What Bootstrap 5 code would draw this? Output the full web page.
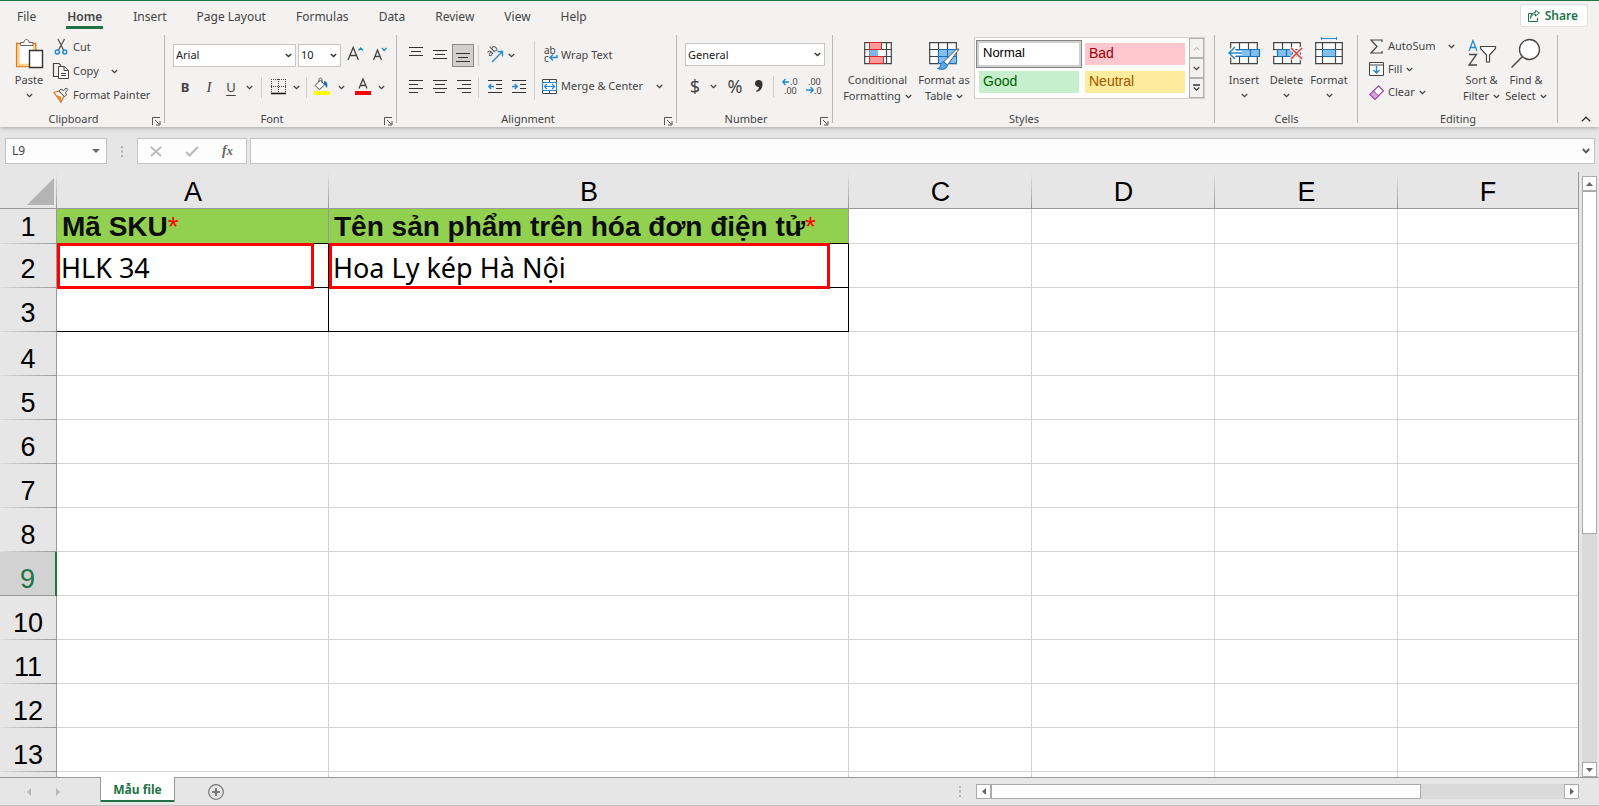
<!DOCTYPE html>
<html lang="vi">
<head>
<meta charset="utf-8">
<meta name="viewport" content="width=device-width, initial-scale=1">
<title>Mẫu file</title>
<link href="https://cdn.jsdelivr.net/npm/bootstrap@5.3.0/dist/css/bootstrap.min.css" rel="stylesheet">
<style>
  :root { --chrome:#e6e6e6; --ribbon:#f3f2f1; --green:#217346; --ink:#444; --edge:#c6c6c6; --hdr:#999; }
  body { font-family:"Noto Sans","Open Sans",sans-serif; font-size:11px; line-height:16px; color:var(--ink); background:var(--chrome); }
  svg { display:block; flex:none; fill:none; overflow:visible; }
  button { color:inherit; }
  .ribbon { background:var(--ribbon); border-top:1px solid var(--green); box-shadow:0 1px 4px rgba(0,0,0,.28); z-index:2; }
  .tabs { height:34px; padding:0 11px 0 17px; font-size:12px; gap:30px; }
  .tabs .tab-link { color:var(--ink); text-decoration:none; line-height:18px; padding:7px 0 0; border-bottom:3px solid transparent; }
  .tabs .tab-link.active { font-weight:600; border-color:var(--green); padding:7px 1px 0; }
  .share { height:23px; margin-top:3px; padding:0 9px 0 7px; background:#fff; border:1px solid #e1dfdd; border-radius:2px; color:var(--green); font-weight:600; gap:5px; }
  .rgroup { height:92px; background:linear-gradient(#b9b8b7,#b9b8b7) right top/1px 88px no-repeat; }
  .rbody { height:76px; }
  .rlabel { line-height:16px; text-align:center; }
  .launch { width:18px; padding:4px 0 0 5px; }
  .rb { border:0; background:none; padding:0; display:flex; align-items:center; justify-content:center; white-space:nowrap; font-size:11px; line-height:16px; }
  .rb.ic { width:24px; height:24px; }
  .rb.chev { width:16px; height:24px; }
  .rb.launch { padding:4px 0 0 0; }
  .big { flex-direction:column; justify-content:flex-start; padding-top:3px; }
  .big .pic { height:34px; }
  .big .dd { height:14px; display:flex; align-items:center; }
  .big .line2 { display:flex; align-items:center; gap:4px; }
  .rrow { height:24px; display:flex; align-items:center; }
  .rsel { height:23px; border:1px solid var(--edge); background:#fff url("data:image/svg+xml,%3Csvg xmlns='http://www.w3.org/2000/svg' width='7' height='5'%3E%3Cpath d='M.8 1l2.7 2.6L6.200 1' fill='none' stroke='%23333' stroke-width='1.400'/%3E%3C/svg%3E") no-repeat right 3px center; appearance:none; padding:0 12px 0 2px; font-size:11px; color:#222; border-radius:0; }
  .sep { width:1px; height:21px; background:#d0cfce; flex:none; }
  .pressed { background:#d0cfcd!important; box-shadow:inset 0 0 0 1px #8c8a88; }
  .gallery { width:231px; height:62px; border:1px solid #d0d0d0; background:#fff; margin-top:2px; }
  .tiles { display:grid; grid-template-columns:100px 100px; grid-auto-rows:22px; gap:6px; padding:5px 3px 0 4px; }
  .tile { border:0; padding:0 0 2px 4px; text-align:left; font:14px/16px "Liberation Sans",Arial,sans-serif; }
  .tile.sel { background:#fff; color:#000; outline:1px solid #858585; outline-offset:2px; box-shadow:0 0 0 2px #d0d0cf; font-size:13px; }
  .spin { width:15px; }
  .spin button { flex:1; border:1px solid #b3b3b3; background:var(--ribbon); padding:0; display:flex; align-items:center; justify-content:center; }
  .fbar { padding:11px 4px 8px 5px; }
  .fbox { height:26px; background:#fdfdfd; border:1px solid #c3c3c3; }
  .fbox input { border:0; background:transparent; padding:0 0 0 6px; width:100%; font-size:12px; color:var(--ink); }
  .sheet-area { min-height:0; }
  .gridwrap { overflow:hidden; background:#fff; border-right:1px solid var(--hdr); min-width:0; }
  .xl { table-layout:fixed; width:100%; border-collapse:separate; border-spacing:0; font:27px/32px "Liberation Sans",Arial,sans-serif; color:#000; }
  .xl th { background:var(--chrome); font-weight:400; text-align:center; padding:0; vertical-align:bottom; }
  .xl thead th { height:37px; border-bottom:1px solid var(--hdr); background:linear-gradient(#e0e0e0,#999) right bottom/1px 34px no-repeat var(--chrome); }
  .xl thead th:last-child { background:var(--chrome); }
  .xl tbody th { border-right:1px solid var(--hdr); background:linear-gradient(90deg,#dcdcdc,#999) left bottom/100% 1px no-repeat var(--chrome); padding-bottom:3px; }
  .xl tbody tr:nth-child(n+4) th { padding-bottom:1px; }
  .xl td { height:44px; border-right:1px solid #d4d4d4; border-bottom:1px solid #d4d4d4; padding:0 4px; vertical-align:bottom; position:relative; white-space:nowrap; }
  .xl td:last-child { border-right:0; }
  .xl .titles td { height:35px; }
  .xl .titles th { padding-bottom:1px; }
  .xl .titles .lime { background:#92d050; font-weight:700; border-right-color:var(--hdr); border-bottom-color:#000; color:#0d0d0d; line-height:33px; font-size:28px; padding-left:5px; }
  .xl .req { color:#f00; font-weight:400; }
  .xl .boxed { border-color:#000; font-family:"Noto Sans","Open Sans",sans-serif; padding-bottom:3px; }
  .xl tbody .current { background:linear-gradient(#999,#999) left bottom/100% 1px no-repeat #d2d2d2; color:var(--green); border-right:2px solid var(--green); }
  .redbox { position:absolute; inset:-1px 14px -2px 0; border:3px solid #f00; z-index:1; }
  .redbox.wide { right:18px; }
  .corner { display:block; margin:0 3px 3px auto; width:27px; height:27px; background:#b4b4b4; clip-path:polygon(100% 0,100% 100%,0 100%); }
  .vbar { width:20px; padding:4px 2px 0 3px; }
  .sbtn { width:15px; height:15px; border:1px solid #ababab; background:#fff; padding:0; display:flex; align-items:center; justify-content:center; flex:none; }
  .track { background:#dadada; }
  .thumb { background:#fff; border:1px solid #ababab; }
  .footbar { height:29px; flex:none; border-top:1px solid var(--hdr); border-bottom:1px solid #c4c4c4; }
  .sheet-tab { width:75px; height:25px; margin-top:-1px; background:#fff; border:1px solid var(--hdr); border-width:0 1px; box-shadow:inset 0 -2px 0 var(--green); color:var(--green); font-weight:700; font-size:12px; padding:0; }
</style>
</head>
<body class="vh-100 d-flex flex-column overflow-hidden">
<svg width="0" height="0" class="position-absolute" aria-hidden="true">
  <symbol id="cv" viewBox="0 0 7 5"><path d="M.8 1l2.700 2.600L6.200 1" stroke="#444" stroke-width="1.300" fill="none"/></symbol>
  <symbol id="lau" viewBox="0 0 9 9"><path d="M.5 8V.5H8M3 3l4.500 4.500M8 4v4H4" stroke="#555" fill="none"/></symbol>
</svg>

<header class="ribbon position-relative flex-shrink-0">
  <nav class="tabs d-flex align-items-start">
    <a class="tab-link" href="#">File</a><a class="tab-link active" href="#">Home</a><a class="tab-link" href="#">Insert</a><a class="tab-link" href="#">Page Layout</a><a class="tab-link" href="#">Formulas</a><a class="tab-link" href="#">Data</a><a class="tab-link" href="#">Review</a><a class="tab-link" href="#">View</a><a class="tab-link" href="#">Help</a>
    <button class="share d-flex align-items-center ms-auto"><svg width="12" height="12" viewBox="0 0 12 12" stroke="#217346"><path d="M4 3.500H.5v8h9V8M2.500 8.500c.5-3 2-4.500 5-4.500V6l4-3.200L7.500.5v1.800C4 2.500 2.500 5 2.500 8.500z"/></svg>Share</button>
  </nav>

  <div class="d-flex">
    <!-- Clipboard -->
    <section class="rgroup" style="width:165px">
      <div class="rbody d-flex" style="padding-left:5px">
        <button class="rb big" style="width:48px"><span class="pic"><svg width="28" height="32" viewBox="0 0 28 32"><path d="M1.700 5.500h19v23h-19z" fill="#fff" stroke="#e07a10" stroke-width="1.500"/><path d="M3.500 7v20h15.500V7" stroke="#f8d48a" stroke-width="2.500"/><path d="M5.500 7.500v-3h3.500c0-4 5-4 5 0h4v3z" fill="#fff" stroke="#666"/><path d="M14.500 12.500h13v17h-13z" fill="#fff" stroke="#333" stroke-width="1.400"/></svg></span><span>Paste</span><span class="dd"><svg width="7" height="5"><use href="#cv"/></svg></span></button>
        <div>
          <div class="rrow"><button class="rb gap-1"><svg width="16" height="18" viewBox="0 0 16 18"><path d="M5 1l5.500 11M11.500 1L5.500 12" stroke="#555" stroke-width="1.300"/><circle cx="4.300" cy="14" r="2" stroke="#2288d0" stroke-width="1.500"/><circle cx="11.700" cy="14" r="2" stroke="#2288d0" stroke-width="1.500"/></svg>Cut</button></div>
          <div class="rrow"><button class="rb gap-1"><svg width="16" height="18" viewBox="0 0 16 18"><path d="M5 14.500H.5v-13H6l2 2" stroke="#444" stroke-width="1.200"/><path d="M5.500 4.500h6l4 4v8h-10zM11 4.500v4h4.500M8 11.500h5M8 13.500h5" fill="#fff" stroke="#444"/></svg>Copy</button><button class="rb chev ms-2" aria-label="Copy options"><svg width="7" height="5"><use href="#cv"/></svg></button></div>
          <div class="rrow"><button class="rb gap-1"><svg width="16" height="18" viewBox="0 0 16 18"><path d="M1 6.500l5-1.500 5 5-3 6z" fill="#fff" stroke="#d8741a" stroke-width="1.200"/><path d="M2 8.500l6 2 .5 4.500L6 13.500z" fill="#ef8b2c"/><path d="M6 5l2-2 2.500 1.500L13 2l2 1.500-2.500 3L13.500 9l-2 1.500z" fill="#eee" stroke="#555"/></svg>Format Painter</button></div>
        </div>
      </div>
      <div class="d-flex"><div class="rlabel flex-fill">Clipboard</div><button class="rb launch" aria-label="Clipboard settings"><svg width="9" height="9"><use href="#lau"/></svg></button></div>
    </section>

    <!-- Font -->
    <section class="rgroup" style="width:232px">
      <div class="rbody d-flex flex-column gap-2 pt-2 ps-2">
        <div class="d-flex align-items-center">
          <select class="rsel" style="width:123px" aria-label="Font"><option>Arial</option></select>
          <select class="rsel" style="width:43px;margin-left:2px" aria-label="Font size"><option>10</option></select>
          <button class="rb ic ms-1" aria-label="Increase font size"><svg width="18" height="18" viewBox="0 0 18 18"><path d="M0 14L5.200 1.500 10.400 14M2 9.500h6.500" stroke="#444" stroke-width="1.300"/><path d="M10.500 4.500L12.700 2 15 4.500" stroke="#2288d0" stroke-width="1.300"/></svg></button>
          <button class="rb ic" aria-label="Decrease font size"><svg width="18" height="18" viewBox="0 0 18 18"><path d="M1.500 14L5.500 4l4 10M3 10.500h5" stroke="#444" stroke-width="1.300"/><path d="M10 2l2.200 2.500L14.500 2" stroke="#2288d0" stroke-width="1.300"/></svg></button>
        </div>
        <div class="rrow">
          <button class="rb ic" style="font-size:13px"><b>B</b></button>
          <button class="rb ic" style="font:italic 15px 'Liberation Serif',serif">I</button>
          <button class="rb" style="font-size:13px;width:20px;text-decoration:underline;text-underline-offset:3px">U</button>
          <button class="rb chev" aria-label="Underline options"><svg width="7" height="5"><use href="#cv"/></svg></button>
          <span class="sep ms-1"></span>
          <button class="rb ic ms-1" aria-label="Borders"><svg width="15" height="16" viewBox="0 0 15 16"><path d="M0 .5h15M0 7.500h15M.5 0v14M7.500 0v14M14.500 0v14" stroke="#444" stroke-dasharray="1 1"/><path d="M0 14.500h15" stroke="#111" stroke-width="1.500"/></svg></button>
          <button class="rb chev" aria-label="Border options" style="width:12px"><svg width="7" height="5"><use href="#cv"/></svg></button>
          <span class="sep ms-1"></span>
          <button class="rb ic" aria-label="Fill colour" style="width:28px"><svg width="18" height="18" viewBox="0 0 18 18"><path d="M3 7.500L8.500 2l4 5-5 4.500zM7 4V1.500c0-2 3-2 3 0V5" fill="#fff" stroke="#555"/><path d="M12 3c3 0 4 3 3 7-1-.5-1-3-3-3z" fill="#1a6fb5"/><path d="M2 13h16v4H2z" fill="#ff0"/></svg></button>
          <button class="rb chev" aria-label="Fill colour options" style="width:12px"><svg width="7" height="5"><use href="#cv"/></svg></button>
          <button class="rb ic ms-1" aria-label="Font colour"><svg width="16" height="18" viewBox="0 0 16 18"><path d="M4 10.500L8 1l4 9.500M5.300 7.500h5.400" stroke="#444" stroke-width="1.300"/><path d="M0 13h16v4H0z" fill="red"/></svg></button>
          <button class="rb chev" aria-label="Font colour options" style="width:12px"><svg width="7" height="5"><use href="#cv"/></svg></button>
        </div>
      </div>
      <div class="d-flex"><div class="rlabel flex-fill">Font</div><button class="rb launch" aria-label="Font settings"><svg width="9" height="9"><use href="#lau"/></svg></button></div>
    </section>

    <!-- Alignment -->
    <section class="rgroup" style="width:280px">
      <div class="rbody d-flex" style="padding-left:7px">
        <div class="d-flex flex-column gap-2 pt-2" style="width:130px">
          <div class="d-flex align-items-center">
            <button class="rb" style="width:24px;height:23px" aria-label="Top align"><svg width="14" height="16" viewBox="0 0 14 16"><path d="M0 .5h14M2 4.500h10M0 8.500h14" stroke="#333"/></svg></button>
            <button class="rb" style="width:24px;height:23px" aria-label="Middle align"><svg width="14" height="16" viewBox="0 0 14 16"><path d="M0 3.500h14M2 7.500h10M0 11.500h14" stroke="#333"/></svg></button>
            <button class="rb pressed" style="width:22px;height:23px" aria-label="Bottom align"><svg width="14" height="16" viewBox="0 0 14 16"><path d="M0 6.500h14M2 10.500h10M0 14.500h14" stroke="#333"/></svg></button>
            <span class="sep ms-1"></span>
            <button class="rb ic ms-1" aria-label="Orientation"><svg width="18" height="18" viewBox="0 0 18 18"><text transform="translate(4 11) rotate(-45)" font-size="10" fill="#444">ab</text><path d="M6 16L16 6M11.500 5.500h5v5" stroke="#2288d0" stroke-width="1.300"/></svg></button>
            <button class="rb chev" aria-label="Orientation options" style="width:8px"><svg width="7" height="5"><use href="#cv"/></svg></button>
          </div>
          <div class="rrow">
            <button class="rb ic" aria-label="Align left"><svg width="14" height="14" viewBox="0 0 14 14"><path d="M0 .5h14M0 4.500h9M0 8.500h14M0 12.500h9" stroke="#333"/></svg></button>
            <button class="rb ic" aria-label="Center"><svg width="14" height="14" viewBox="0 0 14 14"><path d="M0 .5h14M2 4.500h10M0 8.500h14M2 12.500h10" stroke="#333"/></svg></button>
            <button class="rb ic" aria-label="Align right"><svg width="14" height="14" viewBox="0 0 14 14"><path d="M0 .5h14M5 4.500h9M0 8.500h14M5 12.500h9" stroke="#333"/></svg></button>
            <span class="sep" style="margin-left:2px"></span>
            <button class="rb ic ms-1" aria-label="Decrease indent"><svg width="14" height="14" viewBox="0 0 14 14"><path d="M0 .5h14M8 4.500h6M8 8.500h6M0 12.500h14" stroke="#333"/><path d="M.8 6.500H6M3.200 4L.8 6.500 3.200 9" stroke="#2288d0" stroke-width="1.400"/></svg></button>
            <button class="rb ic" aria-label="Increase indent"><svg width="14" height="14" viewBox="0 0 14 14"><path d="M0 .5h14M8 4.500h6M8 8.500h6M0 12.500h14" stroke="#333"/><path d="M0 6.500h5.200M2.800 4l2.400 2.500L2.800 9" stroke="#2288d0" stroke-width="1.400"/></svg></button>
          </div>
        </div>
        <span class="sep" style="height:59px;margin-top:6px"></span>
        <div class="d-flex flex-column gap-2 pt-2" style="padding-left:7px">
          <button class="rb gap-1" style="height:23px;justify-content:flex-start"><svg width="15" height="17" viewBox="0 0 15 17"><text x="2" y="8" font-size="10" fill="#444">ab</text><text x="2" y="16" font-size="10" fill="#444">c</text><path d="M15 9v2.500H8.500M11 8.500l-3 3 3 3" stroke="#2288d0" stroke-width="1.400"/></svg>Wrap Text</button>
          <div class="rrow"><button class="rb gap-1"><svg width="15" height="15" viewBox="0 0 15 15"><path d="M.5.5h14v14H.5zM7.500 0v4M7.500 11v4" fill="#fff" stroke="#444"/><path d="M.5 3.500h14v8H.5z" fill="#fff" stroke="#2288d0"/><path d="M2.500 7.500h10M5 5L2.500 7.500 5 10M10 5l2.500 2.500L10 10" stroke="#2288d0" stroke-width="1.200"/></svg>Merge &amp; Center</button><button class="rb chev ms-2" aria-label="Merge options"><svg width="7" height="5"><use href="#cv"/></svg></button></div>
        </div>
      </div>
      <div class="d-flex"><div class="rlabel flex-fill">Alignment</div><button class="rb launch" aria-label="Alignment settings"><svg width="9" height="9"><use href="#lau"/></svg></button></div>
    </section>

    <!-- Number -->
    <section class="rgroup" style="width:156px">
      <div class="rbody d-flex flex-column gap-2 pt-2 ps-2">
        <select class="rsel" style="width:140px" aria-label="Number format"><option>General</option></select>
        <div class="rrow">
          <button class="rb" style="width:20px;font-size:18px">$</button>
          <button class="rb chev" aria-label="Currency options"><svg width="7" height="5"><use href="#cv"/></svg></button>
          <button class="rb" style="width:28px;font-size:18px">%</button>
          <button class="rb" style="width:20px" aria-label="Comma style"><svg width="10" height="14" viewBox="0 0 10 14"><path d="M4.500 1C7 1 8.500 2.500 8.500 5c0 4-2 7-6 8l-.5-1c2-1 3-2.500 3-4C2.500 8 1 6.500 1 4.500 1 2.500 2.500 1 4.500 1z" fill="#333"/></svg></button>
          <span class="sep ms-1"></span>
          <button class="rb ic ms-1" aria-label="Increase decimal"><svg width="16" height="18" viewBox="0 0 16 18" font-size="9"><text x="8" y="8" fill="#444">.0</text><text x="2" y="17" fill="#444">.00</text><path d="M1 5h6M3.500 2L.8 5l2.700 3" stroke="#2288d0" stroke-width="1.300"/></svg></button>
          <button class="rb ic" aria-label="Decrease decimal"><svg width="16" height="18" viewBox="0 0 16 18" font-size="9"><text x="2" y="8" fill="#444">.00</text><text x="8" y="17" fill="#444">.0</text><path d="M0 13h7M4.500 10l2.700 3-2.700 3" stroke="#2288d0" stroke-width="1.300"/></svg></button>
        </div>
      </div>
      <div class="d-flex"><div class="rlabel flex-fill">Number</div><button class="rb launch" aria-label="Number settings"><svg width="9" height="9"><use href="#lau"/></svg></button></div>
    </section>

    <!-- Styles -->
    <section class="rgroup" style="width:382px">
      <div class="rbody d-flex ps-2">
        <button class="rb big" style="width:73px"><span class="pic"><svg width="28" height="30" viewBox="0 0 28 30"><path d="M.7 4.700h26.600v21H.7zM0 11.500h28M0 18.500h28M6 4v22M22.500 4v22" fill="#fff" stroke="#444" stroke-width="1.200"/><path d="M5.500 4.500h12v7h-12zM5.500 18.500h14v7h-14z" fill="#ff9a9a" stroke="#e0262b"/><path d="M6 12h8v6H6z" fill="#7db8ea"/></svg></span><span>Conditional</span><span class="line2">Formatting <svg width="7" height="5"><use href="#cv"/></svg></span></button>
        <button class="rb big" style="width:60px"><span class="pic"><svg width="31" height="30" viewBox="0 0 31 30"><path d="M.7 4.700h26.600v21H.7zM0 11.500h28M0 18.500h28M9.500 4v22M18.500 4v22" fill="#fff" stroke="#444" stroke-width="1.200"/><path d="M9.500 11.500h18v14h-18zM9.500 18.500h18M18.500 11v15" fill="#83beec" stroke="#1a6fb5"/><path d="M30 11L18.500 27l-4-3L27 11.500z" fill="#fff" stroke="#555"/><path d="M14.500 24l4 3c-1 5-6 5-10 3.500 3 0 3-6 6-6.500z" fill="#5aa7e4" stroke="#1a6fb5"/></svg></span><span>Format as</span><span class="line2">Table <svg width="7" height="5"><use href="#cv"/></svg></span></button>
        <div class="gallery d-flex">
          <div class="tiles flex-fill"><button class="tile sel">Normal</button><button class="tile" style="background:#ffc7ce;color:#9c0006">Bad</button><button class="tile" style="background:#c6efce;color:#006100">Good</button><button class="tile" style="background:#ffeb9c;color:#9c5700">Neutral</button></div>
          <div class="spin d-flex flex-column"><button aria-label="Previous styles"><svg width="7" height="5" viewBox="0 0 7 5"><path d="M.8 4l2.700-2.600L6.200 4" stroke="#aaa"/></svg></button><button aria-label="Next styles"><svg width="7" height="5"><use href="#cv"/></svg></button><button aria-label="More styles"><svg width="7" height="8" viewBox="0 0 7 8"><path d="M0 1h7M.8 3.500l2.700 2.600 2.700-2.600" stroke="#333" stroke-width="1.300"/></svg></button></div>
        </div>
      </div>
      <div class="rlabel">Styles</div>
    </section>

    <!-- Cells -->
    <section class="rgroup" style="width:143px">
      <div class="rbody d-flex justify-content-center">
        <button class="rb big" style="width:43px"><span class="pic"><svg width="32" height="30" viewBox="0 0 32 30"><path d="M2.700 4.700h26.600v21H2.700zM2 11.500h28M2 18.500h28M11.500 4v22M20.500 4v22" fill="#fff" stroke="#444" stroke-width="1.200"/><path d="M8 11.500h23.500v7H8M22.500 12v6" fill="#83beec" stroke="#1a6fb5" stroke-width="1.200"/><path d="M14 15H1M7 9l-6 6 6 6" stroke="#fff" stroke-width="4"/><path d="M14 15H1M7 9l-6 6 6 6" stroke="#2288d0" stroke-width="1.500"/></svg></span><span>Insert</span><span class="dd"><svg width="7" height="5"><use href="#cv"/></svg></span></button>
        <button class="rb big" style="width:42px"><span class="pic"><svg width="28" height="30" viewBox="0 0 28 30"><path d="M.7 4.700h26.600v21H.7zM0 11.500h28M0 18.500h28M9.500 4v22M18.500 4v22" fill="#fff" stroke="#444" stroke-width="1.200"/><path d="M0 12.200h4v5.600H0z" fill="#f3f2f1"/><path d="M4.500 11.500h15v7h-15zM13.500 12v6" fill="#83beec" stroke="#1a6fb5" stroke-width="1.200"/><path d="M18 10l11 11M29 10L18 21" stroke="#f3f2f1" stroke-width="4"/><path d="M18 10l11 11M29 10L18 21" stroke="#e8393d" stroke-width="1.500"/></svg></span><span>Delete</span><span class="dd"><svg width="7" height="5"><use href="#cv"/></svg></span></button>
        <button class="rb big" style="width:43px"><span class="pic"><svg width="28" height="30" viewBox="0 0 28 30"><path d="M.7 4.700h26.600v21H.7zM0 11.500h28M0 18.500h28M7.500 4v22M20.500 4v22" fill="#fff" stroke="#444" stroke-width="1.200"/><path d="M7.500 11.500h13v7h-13z" fill="#83beec" stroke="#1a6fb5"/><path d="M6.500 -1v3M21.500 -1v3M6.500 .5h15" stroke="#2288d0"/></svg></span><span>Format</span><span class="dd"><svg width="7" height="5"><use href="#cv"/></svg></span></button>
      </div>
      <div class="rlabel">Cells</div>
    </section>

    <!-- Editing -->
    <section class="rgroup" style="width:200px">
      <div class="rbody d-flex" style="padding-left:11px">
        <div style="width:91px">
          <div class="rrow" style="height:22px"><button class="rb gap-1"><svg width="15" height="15" viewBox="0 0 15 15"><path d="M13 3V1H2l6 6.500L2 14h11v-2" stroke="#444" stroke-width="1.200"/></svg>AutoSum</button><button class="rb chev ms-2" aria-label="AutoSum options"><svg width="7" height="5"><use href="#cv"/></svg></button></div>
          <div class="rrow"><button class="rb gap-1"><svg width="15" height="14" viewBox="0 0 15 14"><path d="M.5.5h14v13H.5zM.5 3h14" fill="#fff" stroke="#444"/><path d="M7.500 4v7M4.500 8l3 3 3-3" stroke="#2288d0" stroke-width="1.400"/></svg>Fill <svg width="7" height="5"><use href="#cv"/></svg></button></div>
          <div class="rrow" style="height:22px"><button class="rb gap-1"><svg width="15" height="15" viewBox="0 0 15 15"><path d="M1 9.500L9.500.8l5 5L6 14.300z" fill="#fff" stroke="#9b3fa8" stroke-width="1.200"/><path d="M1 9.500l3.500-3.600 5 5L6 14.300z" fill="#d9a0df" stroke="#9b3fa8"/></svg>Clear <svg width="7" height="5"><use href="#cv"/></svg></button></div>
        </div>
        <button class="rb big" style="width:43px"><span class="pic"><svg width="28" height="30" viewBox="0 0 28 30"><path d="M1 13L5 2.500 9 13M2.300 9.500h5.400" stroke="#2288d0" stroke-width="1.300"/><path d="M1 16.500h7.500L1 27h8" stroke="#444" stroke-width="1.300"/><path d="M12.500 8.500h15v2l-6 6.500v7h-3v-7l-6-6.500z" fill="#fff" stroke="#444" stroke-width="1.200"/></svg></span><span>Sort &amp;</span><span class="line2">Filter <svg width="7" height="5"><use href="#cv"/></svg></span></button>
        <button class="rb big" style="width:46px"><span class="pic"><svg width="30" height="30" viewBox="0 0 30 30"><circle cx="18.500" cy="11.500" r="10" fill="#fff" stroke="#444" stroke-width="1.300"/><path d="M11.500 18.500L.5 29.500" stroke="#444" stroke-width="1.400"/></svg></span><span>Find &amp;</span><span class="line2">Select <svg width="7" height="5"><use href="#cv"/></svg></span></button>
      </div>
      <div class="rlabel">Editing</div>
    </section>
    <button class="rb ms-auto align-self-end pe-2" style="height:16px" aria-label="Collapse ribbon"><svg width="10" height="6" viewBox="0 0 10 6"><path d="M.8 5.200L5 1.200l4.200 4" stroke="#333" stroke-width="1.300"/></svg></button>
  </div>
</header>

<div class="fbar d-flex align-items-center flex-shrink-0">
  <div class="fbox d-flex align-items-center" style="width:102px"><input value="L9" aria-label="Name box"><svg width="8" height="5" viewBox="0 0 8 5" style="margin-right:6px"><path d="M0 0h8L4 4z" fill="#666"/></svg></div>
  <svg width="2" height="11" viewBox="0 0 2 11" style="margin:0 14px"><path d="M0 0h2v2H0zM0 4.500h2v2H0zM0 9h2v2H0z" fill="#b0b0b0"/></svg>
  <div class="fbox d-flex align-items-center" style="width:110px;padding-left:12px;gap:23px">
    <button class="rb" aria-label="Cancel"><svg width="12" height="11" viewBox="0 0 12 11"><path d="M1 1l10 9M11 1L1 10" stroke="#bbb" stroke-width="1.800"/></svg></button>
    <button class="rb" aria-label="Enter"><svg width="14" height="11" viewBox="0 0 14 11"><path d="M1 6l3.500 3.500L13 1" stroke="#bbb" stroke-width="2.200"/></svg></button>
    <button class="rb" style="font:italic 700 14px 'Liberation Serif',serif;color:#666" aria-label="Insert function"><i>f</i><small>x</small></button>
  </div>
  <div class="fbox flex-fill d-flex align-items-center" style="margin-left:3px"><input aria-label="Formula bar"><svg class="me-1" width="8" height="6" viewBox="0 0 8 6"><path d="M.8 1L4 4.300 7.200 1" stroke="#555" stroke-width="1.900"/></svg></div>
</div>

<main class="sheet-area flex-fill d-flex">
  <div class="gridwrap flex-fill">
    <table class="xl">
      <colgroup><col style="width:57px"><col style="width:272px"><col style="width:520px"><col style="width:183px"><col style="width:183px"><col style="width:183px"><col></colgroup>
      <thead><tr><th><span class="corner"></span></th><th>A</th><th>B</th><th>C</th><th>D</th><th>E</th><th>F</th></tr></thead>
      <tbody>
        <tr class="titles"><th>1</th><td class="lime">Mã SKU<span class="req">*</span></td><td class="lime">Tên sản phẩm trên hóa đơn điện tử<span class="req">*</span></td><td></td><td></td><td></td><td></td></tr>
        <tr><th>2</th><td class="boxed">HLK 34<span class="redbox"></span></td><td class="boxed">Hoa Ly kép Hà Nội<span class="redbox wide"></span></td><td></td><td></td><td></td><td></td></tr>
        <tr><th>3</th><td class="boxed"></td><td class="boxed"></td><td></td><td></td><td></td><td></td></tr>
        <tr><th>4</th><td></td><td></td><td></td><td></td><td></td><td></td></tr>
        <tr><th>5</th><td></td><td></td><td></td><td></td><td></td><td></td></tr>
        <tr><th>6</th><td></td><td></td><td></td><td></td><td></td><td></td></tr>
        <tr><th>7</th><td></td><td></td><td></td><td></td><td></td><td></td></tr>
        <tr><th>8</th><td></td><td></td><td></td><td></td><td></td><td></td></tr>
        <tr><th class="current">9</th><td></td><td></td><td></td><td></td><td></td><td></td></tr>
        <tr><th>10</th><td></td><td></td><td></td><td></td><td></td><td></td></tr>
        <tr><th>11</th><td></td><td></td><td></td><td></td><td></td><td></td></tr>
        <tr><th>12</th><td></td><td></td><td></td><td></td><td></td><td></td></tr>
        <tr><th>13</th><td></td><td></td><td></td><td></td><td></td><td></td></tr>
        <tr><th></th><td></td><td></td><td></td><td></td><td></td><td></td></tr>
      </tbody>
    </table>
  </div>
  <div class="vbar d-flex flex-column">
    <button class="sbtn" aria-label="Scroll up"><svg width="7" height="4" viewBox="0 0 7 4"><path d="M0 4h7L3.500 0z" fill="#666"/></svg></button>
    <div class="track flex-fill"><div class="thumb" style="height:60%"></div></div>
    <button class="sbtn" aria-label="Scroll down"><svg width="7" height="4" viewBox="0 0 7 4"><path d="M0 0h7L3.500 4z" fill="#666"/></svg></button>
  </div>
</main>

<footer class="footbar d-flex align-items-start">
  <div class="d-flex align-self-center justify-content-center" style="width:100px;gap:25px;padding-right:14px">
    <svg width="4" height="8" viewBox="0 0 4 8"><path d="M4 0v8L0 4z" fill="#b8b8b8"/></svg>
    <svg width="4" height="8" viewBox="0 0 4 8"><path d="M0 0v8l4-4z" fill="#b8b8b8"/></svg>
  </div>
  <button class="sheet-tab">Mẫu file</button>
  <button class="rb align-self-center" style="margin-left:33px" aria-label="New sheet"><svg width="16" height="16" viewBox="0 0 16 16"><circle cx="8" cy="8" r="7.300" stroke="#777" stroke-width="1.200"/><path d="M8 4v8M4 8h8" stroke="#777" stroke-width="2"/></svg></button>
  <div class="d-flex align-items-center ms-auto align-self-center" style="width:40%;padding-right:20px">
    <svg width="2" height="11" viewBox="0 0 2 11" style="margin-right:15px"><path d="M0 0h2v2H0zM0 4.500h2v2H0zM0 9h2v2H0z" fill="#b0b0b0"/></svg>
    <button class="sbtn" aria-label="Scroll left"><svg width="4" height="7" viewBox="0 0 4 7"><path d="M4 0v7L0 3.500z" fill="#666"/></svg></button>
    <div class="track flex-fill d-flex"><div class="thumb" style="width:75%;height:15px"></div></div>
    <button class="sbtn" aria-label="Scroll right"><svg width="4" height="7" viewBox="0 0 4 7"><path d="M0 0v7l4-3.500z" fill="#666"/></svg></button>
  </div>
</footer>
<script src="https://cdn.jsdelivr.net/npm/bootstrap@5.3.0/dist/js/bootstrap.bundle.min.js"></script>
</body>
</html>
